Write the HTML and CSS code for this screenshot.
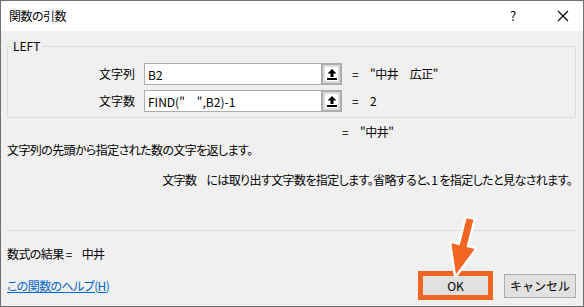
FILE: index.html
```html
<!DOCTYPE html>
<html lang="ja">
<head>
  <meta charset="UTF-8">
  <title>関数の引数</title>
  <link rel="stylesheet" href="styles.css">
</head>
<body>
  <div class="window">
    <div class="titlebar">
      <span class="title">関数の引数</span>
      <span class="help">?</span>
      <svg class="close" width="12" height="12" viewBox="0 0 12 12">
        <path d="M1 1 L11 11 M11 1 L1 11" stroke="#000" stroke-width="1.1" fill="none"/>
      </svg>
    </div>

    <div class="content">
      <fieldset class="args">
        <legend>LEFT</legend>
        <div class="arg-row">
          <label class="arg-label">文字列</label>
          <div class="arg-input">B2</div>
          <div class="ref-btn">
            <span class="ref-icon">
              <svg width="10" height="11" viewBox="0 0 10 11"><path d="M5 0 L9.5 4.5 L6.5 4.5 L6.5 8 L3.5 8 L3.5 4.5 L0.5 4.5 Z" fill="#000"/><rect x="0" y="9" width="10" height="2" fill="#000"/></svg>
            </span>
          </div>
          <span class="eq">=</span>
          <span class="arg-value">"中井　広正"</span>
        </div>
        <div class="arg-row">
          <label class="arg-label">文字数</label>
          <div class="arg-input">FIND("　",B2)-1</div>
          <div class="ref-btn">
            <span class="ref-icon">
              <svg width="10" height="11" viewBox="0 0 10 11"><path d="M5 0 L9.5 4.5 L6.5 4.5 L6.5 8 L3.5 8 L3.5 4.5 L0.5 4.5 Z" fill="#000"/><rect x="0" y="9" width="10" height="2" fill="#000"/></svg>
            </span>
          </div>
          <span class="eq">=</span>
          <span class="arg-value">2</span>
        </div>
      </fieldset>

      <div class="result-row">
        <span class="eq">=</span>
        <span class="arg-value">"中井"</span>
      </div>
      <p class="desc">文字列の先頭から指定された数の文字を返します。</p>
      <p class="arg-desc"><span class="arg-name">文字数</span>には取り出す文字数を指定します。省略すると、1 を指定したと見なされます。</p>

      <hr class="sep">

      <p class="formula">数式の結果 =<span class="formula-value">中井</span></p>

      <div class="footer">
        <a class="help-link" href="#">この関数のヘルプ(H)</a>
        <div class="buttons">
          <button class="btn btn-ok">OK</button>
          <button class="btn">キャンセル</button>
        </div>
      </div>
    </div>

    <svg class="pointer" width="60" height="72" viewBox="0 0 60 72">
      <g transform="translate(40 9) rotate(14.3)">
        <polygon points="-3.5,0 3.5,0 3.5,28 12,28 0,57 -12,28 -3.5,28" fill="#f26522" stroke="#fff" stroke-width="5" stroke-linejoin="round" paint-order="stroke"/>
      </g>
    </svg>
  </div>
</body>
</html>
```

FILE: styles.css
```css
* {
  box-sizing: border-box;
}

body {
  margin: 0;
  font-family: "Noto Sans CJK JP", "Noto Sans", sans-serif;
  font-size: 12px;
  line-height: 18px;
  font-feature-settings: "palt";
  color: #000;
  background: #fff;
}

.window {
  position: relative;
  width: 584px;
  height: 307px;
  border: 1px solid #707070;
  background: #f0f0f0;
}

.titlebar {
  display: flex;
  align-items: center;
  height: 30px;
  background: #fff;
  padding-left: 8px;
}

.title {
  flex: 1;
  font-size: 12px;
  letter-spacing: -0.5px;
}

.help {
  width: 12px;
  margin-right: 35px;
  font-size: 13px;
}

.close {
  margin-right: 14px;
}

.content {
  padding: 8px 7px 0 6px;
}

.args {
  margin: 0;
  padding: 10px 0 5px 0;
  border: 1px solid #dcdcdc;
}

.args legend {
  margin-left: 3px;
  padding: 0 2px;
  font-size: 12px;
  line-height: 14px;
}

.arg-row {
  display: flex;
  align-items: center;
  height: 22px;
  margin-bottom: 5px;
}

.arg-row:last-child {
  margin-bottom: 0;
}

.arg-label {
  width: 127px;
  text-align: right;
  margin-right: 9px;
  font-feature-settings: normal;
}

.arg-input {
  width: 177px;
  height: 22px;
  padding: 1px 3px;
  background: #fff;
  border: 1px solid #adadad;
  border-right: none;
  line-height: 19px;
  white-space: pre;
}

.ref-btn {
  display: flex;
  align-items: center;
  justify-content: center;
  width: 21px;
  height: 22px;
  border: 2px solid #adadad;
  background: #dcdcdc;
}

.ref-icon {
  display: flex;
  align-items: center;
  justify-content: center;
  width: 13px;
  height: 14px;
  background: #fff;
}

.eq {
  margin-left: 10px;
  width: 18px;
}

.arg-value {
  letter-spacing: -0.5px;
}

.result-row {
  display: flex;
  padding-left: 335px;
  margin-top: 5px;
}

.result-row .eq {
  margin-left: 0;
}

.desc {
  margin: 0;
  letter-spacing: -0.6px;
}

.arg-desc {
  margin: 12px 4px 0 0;
  text-align: right;
  letter-spacing: -0.6px;
}

.arg-name {
  margin-right: 10px;
}

.sep {
  margin: 41px 0 0;
  border: none;
  border-top: 1px solid #dadada;
}

.formula {
  margin: 14px 0 0;
  letter-spacing: -0.6px;
}

.formula-value {
  margin-left: 10px;
}

.footer {
  display: flex;
  align-items: center;
  justify-content: space-between;
  margin-top: 8px;
}

.help-link {
  color: #0066cc;
  text-decoration: underline;
  letter-spacing: -0.6px;
}

.buttons {
  display: flex;
  align-items: center;
  gap: 11px;
}

.btn {
  width: 72px;
  height: 24px;
  padding: 0;
  font-family: inherit;
  font-size: 12px;
  background: #e1e1e1;
  border: 1px solid #adadad;
  color: #000;
}

.btn-ok {
  width: 75px;
  height: 29px;
  border: 5px solid #f26522;
}

.pointer {
  position: absolute;
  left: 429px;
  top: 209px;
}
```
